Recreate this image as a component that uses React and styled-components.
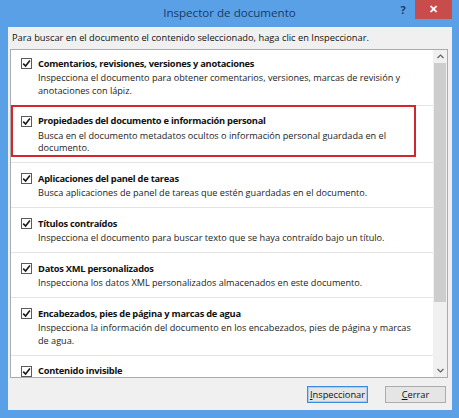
import React from "react";
import styled, { createGlobalStyle } from "styled-components";

const GlobalStyle = createGlobalStyle`
  html, body { margin: 0; padding: 0; }
  body { background: #5aa0e6; font-family: "Open Sans", "Noto Sans", sans-serif; }
  * { box-sizing: border-box; }
`;

const Window = styled.div`
  width: 459px;
  height: 418px;
  background: #5aa0e6;
  display: flex;
  flex-direction: column;
  overflow: hidden;
`;

const TitleBar = styled.div`
  height: 27px;
  display: grid;
  grid-template-columns: 1fr auto 1fr;
  align-items: start;
`;

const Title = styled.div`
  grid-column: 2;
  font-size: 11.6px;
  line-height: 26px;
  color: #1c3a62;
`;

const Controls = styled.div`
  grid-column: 3;
  justify-self: end;
  display: flex;
  align-items: flex-start;
  margin-right: 7px;
`;

const HelpButton = styled.div`
  width: 22px;
  height: 19px;
  font-size: 11px;
  font-weight: 700;
  line-height: 19px;
  text-align: center;
  color: #1d3a66;
  margin-right: 1px;
`;

const CloseButton = styled.div`
  width: 37px;
  height: 19px;
  background: #c84c4c;
  color: #fff;
  font-size: 11px;
  font-weight: 700;
  line-height: 18px;
  text-align: center;
`;

const Client = styled.div`
  flex: 1;
  margin: 0 7px 8px 8px;
  background: #f0f0f0;
  display: flex;
  flex-direction: column;
`;

const Instruction = styled.div`
  padding: 4px 0 0 4px;
  height: 22px;
  font-size: 9.3px;
  line-height: 14px;
  color: #111;
  white-space: nowrap;
`;

const ListBox = styled.div`
  margin: 0 4px 0 2px;
  height: 329px;
  border: 1px solid #ababab;
  background: #fff;
  display: flex;
  overflow: hidden;
`;

const ListContent = styled.div`
  flex: 1;
  overflow: hidden;
`;

const ListInner = styled.div`
  margin-top: -2px;
`;

const Item = styled.div`
  position: relative;
  display: flex;
  align-items: flex-start;
  padding: 7px 6px 7.5px 10px;
  border-bottom: 1px solid #e4e4e4;
`;

const Highlight = styled.div`
  position: absolute;
  left: 0;
  top: -1px;
  right: 17px;
  bottom: 5px;
  border: 2px solid #d3262d;
  pointer-events: none;
`;

const CheckBox = styled.div`
  flex: 0 0 auto;
  width: 11px;
  height: 11px;
  margin-top: 3px;
  border: 1px solid #5a5a5a;
  background: #fff;
  display: flex;
  align-items: center;
  justify-content: center;
`;

const ItemText = styled.div`
  margin-left: 6px;
  flex: 1;
  white-space: nowrap;
`;

const ItemTitle = styled.div`
  font-size: 9.3px;
  font-weight: 700;
  letter-spacing: -0.25px;
  line-height: 15px;
  padding-top: 0.5px;
  color: #111;
`;

const ItemDesc = styled.div`
  margin-top: 1.5px;
  font-size: 9.15px;
  line-height: 12.5px;
  color: #222;
`;

const Scrollbar = styled.div`
  width: 14px;
  background: #f0f0f0;
  display: flex;
  flex-direction: column;
`;

const ScrollArrow = styled.div`
  height: 13px;
  display: flex;
  align-items: center;
  justify-content: center;
`;

const Thumb = styled.div`
  height: 239px;
  margin: 0 1px;
  background: #cdcdcd;
`;

const Track = styled.div`
  flex: 1;
`;

const Footer = styled.div`
  flex: 1;
  display: flex;
  justify-content: flex-end;
  align-items: center;
  gap: 17px;
  padding-right: 6px;
`;

const Button = styled.div`
  width: 61px;
  height: 17px;
  border: 1px solid ${(p) => (p.$default ? "#3c8ce0" : "#acacac")};
  box-shadow: ${(p) => (p.$default ? "inset 0 0 0 1px #a9cdf3" : "none")};
  background: #e5e5e5;
  font-size: 9.3px;
  line-height: 15px;
  text-align: center;
  color: #111;
`;

const Key = styled.span`
  text-decoration: underline;
`;

const Check = () => (
  <svg width="9" height="9" viewBox="0 0 9 9">
    <path d="M1.2 4.6 L3.6 7 L7.9 1.6" fill="none" stroke="#1a1a1a" strokeWidth="1.6" />
  </svg>
);

const Chevron = ({ up }) => (
  <svg width="7" height="5" viewBox="0 0 7 5">
    <path
      d={up ? "M0.5 4 L3.5 1 L6.5 4" : "M0.5 1 L3.5 4 L6.5 1"}
      fill="none"
      stroke="#606060"
      strokeWidth="1.2"
    />
  </svg>
);

const items = [
  {
    title: "Comentarios, revisiones, versiones y anotaciones",
    desc: ["Inspecciona el documento para obtener comentarios, versiones, marcas de revisión y", "anotaciones con lápiz."],
  },
  {
    title: "Propiedades del documento e información personal",
    desc: ["Busca en el documento metadatos ocultos o información personal guardada en el", "documento."],
    highlight: true,
  },
  {
    title: "Aplicaciones del panel de tareas",
    desc: ["Busca aplicaciones de panel de tareas que estén guardadas en el documento."],
  },
  {
    title: "Títulos contraídos",
    desc: ["Inspecciona el documento para buscar texto que se haya contraído bajo un título."],
  },
  {
    title: "Datos XML personalizados",
    desc: ["Inspecciona los datos XML personalizados almacenados en este documento."],
  },
  {
    title: "Encabezados, pies de página y marcas de agua",
    desc: ["Inspecciona la información del documento en los encabezados, pies de página y marcas", "de agua."],
  },
  {
    title: "Contenido invisible",
    desc: [],
  },
];

export default function App() {
  return (
    <>
      <GlobalStyle />
      <Window>
        <TitleBar>
          <Title>Inspector de documento</Title>
          <Controls>
            <HelpButton>?</HelpButton>
            <CloseButton>✕</CloseButton>
          </Controls>
        </TitleBar>
        <Client>
          <Instruction>
            Para buscar en el documento el contenido seleccionado, haga clic en Inspeccionar.
          </Instruction>
          <ListBox>
            <ListContent>
              <ListInner>
                {items.map((it) => (
                  <Item key={it.title}>
                    {it.highlight && <Highlight />}
                    <CheckBox>
                      <Check />
                    </CheckBox>
                    <ItemText>
                      <ItemTitle>{it.title}</ItemTitle>
                      {it.desc.length > 0 && (
                        <ItemDesc>
                          {it.desc.map((d) => (
                            <div key={d}>{d}</div>
                          ))}
                        </ItemDesc>
                      )}
                    </ItemText>
                  </Item>
                ))}
              </ListInner>
            </ListContent>
            <Scrollbar>
              <ScrollArrow>
                <Chevron up />
              </ScrollArrow>
              <Thumb />
              <Track />
              <ScrollArrow>
                <Chevron />
              </ScrollArrow>
            </Scrollbar>
          </ListBox>
          <Footer>
            <Button $default>
              <Key>I</Key>nspeccionar
            </Button>
            <Button>
              <Key>C</Key>errar
            </Button>
          </Footer>
        </Client>
      </Window>
    </>
  );
}
